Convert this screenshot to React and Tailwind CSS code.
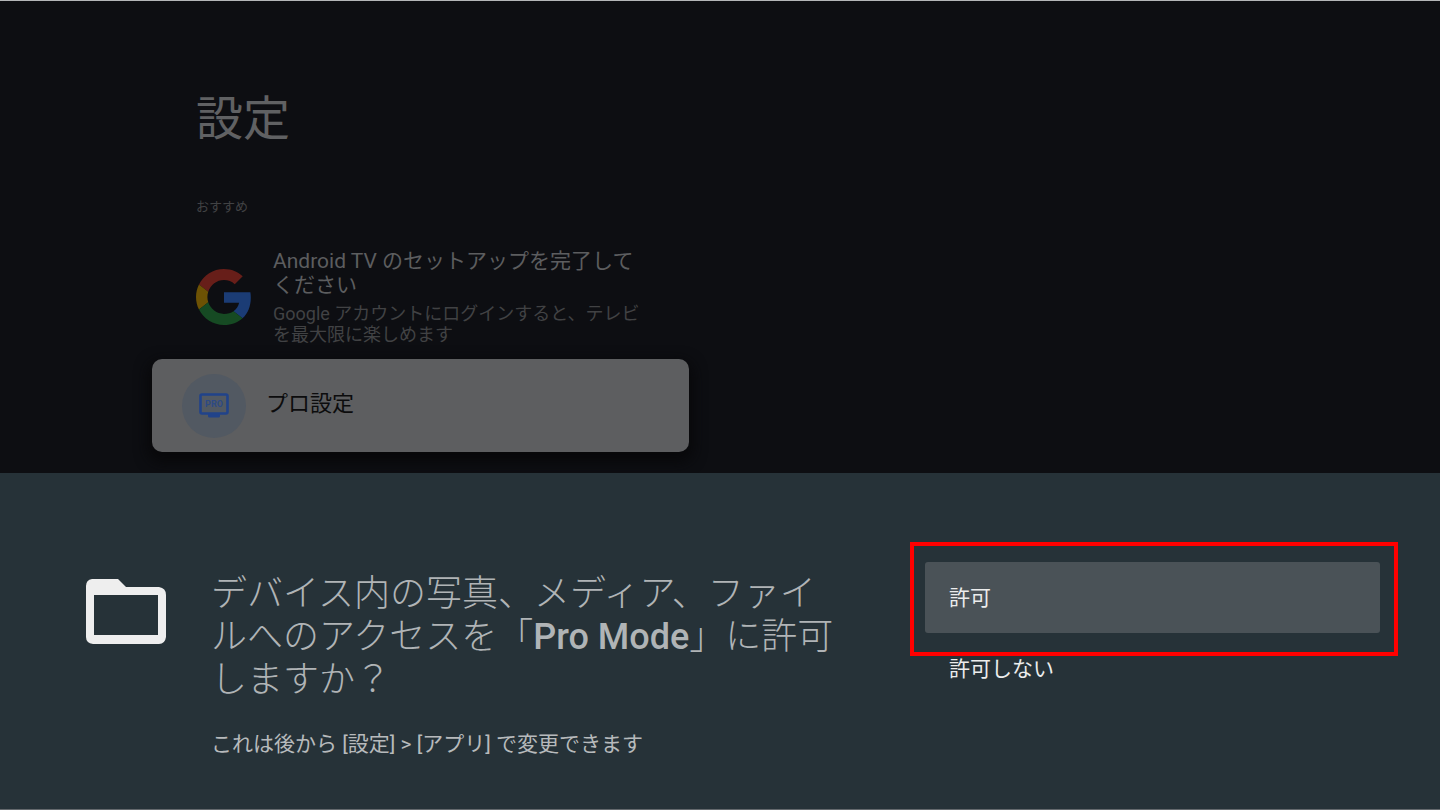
import React from "react";

const GoogleLogo = function GoogleLogo() {
	return (<svg viewBox="0 0 48 48" className="h-14 w-14 shrink-0" aria-hidden="true">
		<path fill="#671e19" d="M24 9.5c3.54 0 6.71 1.22 9.21 3.6l6.85-6.85C35.9 2.38 30.47 0 24 0 14.62 0 6.51 5.38 2.56 13.22l7.98 6.19C12.43 13.72 17.74 9.5 24 9.5z" />
		<path fill="#1b3c75" d="M46.98 24.55c0-1.57-.15-3.09-.38-4.55H24v9.02h12.94c-.58 2.96-2.26 5.48-4.78 7.18l7.73 6c4.51-4.18 7.09-10.36 7.09-17.65z" />
		<path fill="#6d5204" d="M10.53 28.59c-.48-1.45-.76-2.99-.76-4.59s.27-3.14.76-4.59l-7.98-6.19C.92 16.46 0 20.12 0 24c0 3.88.92 7.54 2.56 10.78l7.97-6.19z" />
		<path fill="#164a23" d="M24 48c6.48 0 11.93-2.13 15.89-5.81l-7.73-6c-2.15 1.45-4.92 2.3-8.16 2.3-6.26 0-11.57-4.22-13.47-9.91l-7.98 6.19C6.51 42.62 14.62 48 24 48z" />
	</svg>);
};

const ProIcon = function ProIcon() {
	return (<span className="flex h-16 w-16 shrink-0 items-center justify-center rounded-full bg-[#525962]">
		<svg viewBox="0 0 30 25" className="h-[25px] w-[30px]" aria-hidden="true">
			<rect x="1.5" y="1.5" width="27" height="19" rx="1.5" fill="none" stroke="#21438a" strokeWidth="2.6" />
			<path d="M9 21h12v2q0 1.5-1.5 1.5h-9Q9 24.5 9 23z" fill="#21438a" />
			<text x="15" y="14" textAnchor="middle" fontSize="9" fontWeight="700" fill="#2d4a85">PRO</text>
		</svg>
	</span>);
};

const FolderIcon = function FolderIcon() {
	return (<svg viewBox="0 0 82 66" className="h-[66px] w-[82px] shrink-0" aria-hidden="true">
		<path
			fill="#eeeeee"
			fillRule="evenodd"
			d="M7 0H33L41 8H74Q81 9 81 16V58Q80 65 74 65H8Q1 64 1 58V7Q1 1 7 0ZM9 16V56H73V16Z"
		/>
	</svg>);
};

const SettingsScreen = function SettingsScreen() {
	return (<main className="h-[473px] border-t border-[#b4b6b8] bg-[#0d0e12] px-[152px] pt-[83px]">
		<div className="px-11">
			<h1 className="text-[47px] leading-[70px] text-[#606163]"> 設定 </h1>
			<h2 className="mt-[42px] text-[13px] leading-[21px] text-[#414244]"> おすすめ </h2>
			<a href="#setup" className="mt-8 flex w-[450px] items-center gap-[21px]">
				<GoogleLogo />
				<span className="flex w-[373px] flex-col gap-[6px]">
					<span className="text-[21px] leading-6 text-[#5c5d5f]">Android TV のセットアップを完了してください</span>
					<span className="text-[18px] leading-[21px] text-[#414244]">Google アカウントにログインすると、テレビを最大限に楽しめます</span>
				</span>
			</a>
		</div>
		<button
			type="button"
			className="mt-[14px] flex h-[93px] w-[537px] items-center gap-5 rounded-[10px] bg-[#5d5e60] px-[30px] text-[22px] text-[#0c0c0d] shadow-[0_6px_14px_4px_#08080a]"
		>
			<ProIcon />
			<span className="pb-1">プロ設定</span>
		</button>
	</main>);
};

const PermissionDialog = function PermissionDialog() {
	return (<section
		role="dialog"
		aria-labelledby="permission-title"
		className="flex flex-1 items-start justify-between border-b border-[#64696d] bg-[#263238] pr-[60px] pl-[85px]"
	>
		<div className="flex gap-11 pt-[100px]">
			<div className="pt-[6px]"><FolderIcon /></div>
			<div className="w-[640px]">
				<h2 id="permission-title" className="text-[36px] leading-[43px] font-light text-[#b0b4b6]">
					デバイス内の写真、メディア、ファイルへのアクセスを「<b className="font-medium">Pro Mode</b>」に許可しますか？
				</h2>
				<p className="mt-[27px] text-[21px] leading-[30px] text-[#b7babc]">これは後から [設定] &gt; [アプリ] で変更できます</p>
			</div>
		</div>
		<div className="mt-[89px] flex w-[455px] flex-col text-[21px] text-[#eceded]">
			<div className="relative">
				<button type="button" className="h-[71px] w-full rounded-[3px] bg-[#4a5257] px-6 pt-[2px] text-left">許可</button>
				{/* highlight frame around the default choice */}
				<div className="pointer-events-none absolute -top-5 -right-[18px] -bottom-[23px] -left-[15px] border-4 border-[#ff0000]" />
			</div>
			<button type="button" className="h-[71px] w-full rounded-[3px] px-6 pt-[2px] text-left">許可しない</button>
		</div>
	</section>);
};

export default function App() {
	return (<div className="flex min-h-screen flex-col bg-[#0d0e12] font-[Roboto,'Noto_Sans_CJK_JP',sans-serif]" lang="ja">
		<SettingsScreen />
		<PermissionDialog />
	</div>);
}
